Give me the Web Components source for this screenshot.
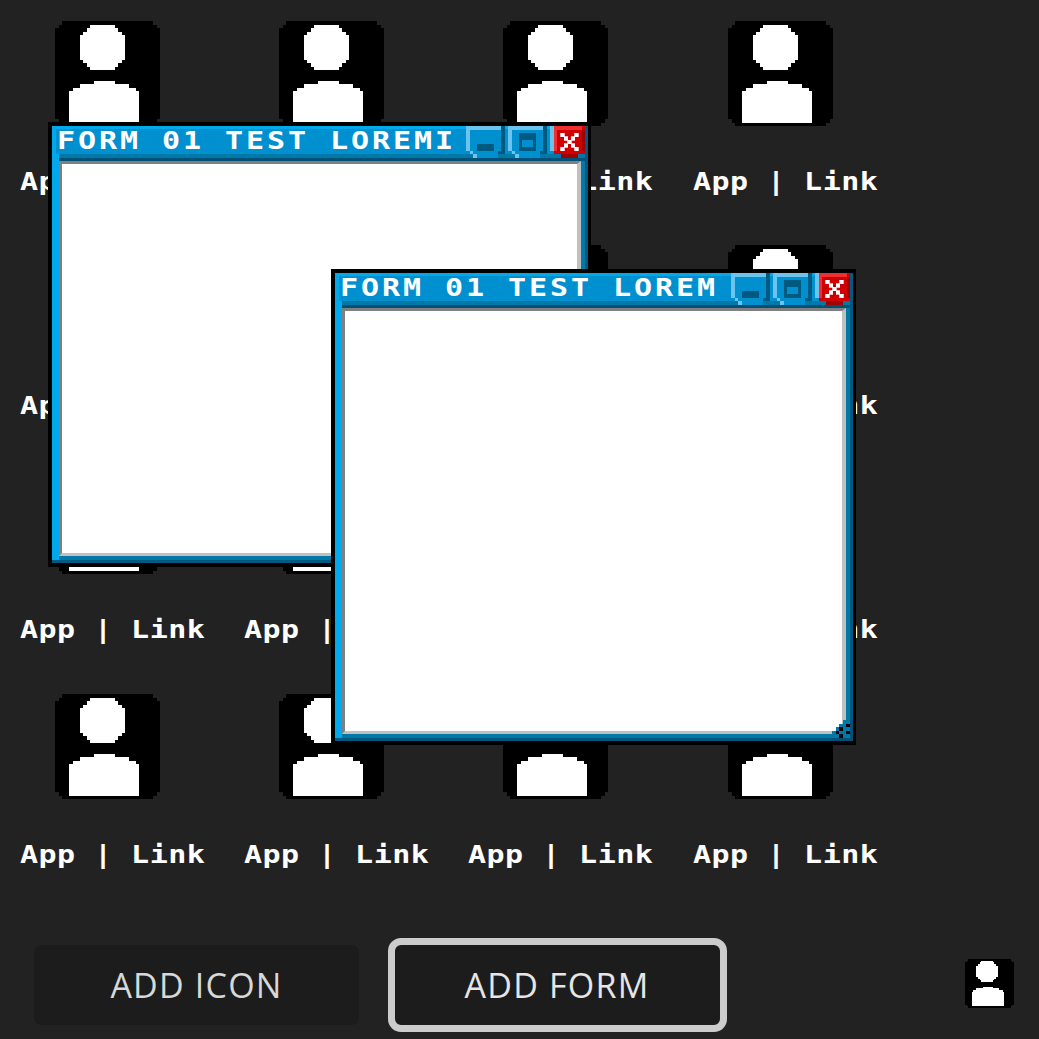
<!DOCTYPE html>
<html>
<head>
<meta charset="utf-8">
<title>Desktop</title>
<style>
  html, body { margin: 0; height: 100%; background: #222; }
</style>
</head>
<body>
<desk-top></desk-top>

<script>
const personSvg = `
  <svg viewBox="0 0 30 30" shape-rendering="crispEdges" width="100%" height="100%">
    <path fill="#000" d="M2 0h26v1h1v1h1v26h-1v1h-1v1H2v-1H1v-1H0V2h1V1h1z"/>
    <path fill="#fff" d="M10 1h7v1h1v1h1v1h1v7h-1v1h-1v1h-1v1h-7v-1H9v-1H8v-1H7V4h1V3h1V2h1z"/>
    <path fill="#fff" d="M11 17h6v1h4v1h2v1h1v9H4v-9h1v-1h2v-1h4z"/>
  </svg>`;

// blocky look for the labels, the text itself stays real text
const pixelFilter = `
  <svg width="0" height="0" style="position:absolute">
    <filter id="px" x="0" y="0" width="100%" height="100%" color-interpolation-filters="sRGB">
      <feFlood x="1" y="1" width="1" height="1" flood-color="#fff"/>
      <feComposite width="3" height="3"/>
      <feTile result="a"/>
      <feComposite in="SourceGraphic" in2="a" operator="in"/>
      <feMorphology operator="dilate" radius="1"/>
      <feComponentTransfer>
        <feFuncA type="linear" slope="4" intercept="-1.2"/>
      </feComponentTransfer>
    </filter>
  </svg>`;

class PersonIcon extends HTMLElement {
  connectedCallback() {
    this.attachShadow({ mode: 'open' }).innerHTML = `
      <style>
        :host { display: block; width: 105px; height: 105px; }
        svg { display: block; }
      </style>
      ${personSvg}`;
  }
}

class PixelText extends HTMLElement {
  connectedCallback() {
    this.attachShadow({ mode: 'open' }).innerHTML = `
      <style>
        :host {
          display: block;
          width: 345px;
          height: var(--line, 24px);
          color: #fff;
          font: bold 20.6px/var(--line, 24px) "DejaVu Sans Mono", monospace;
          letter-spacing: var(--track, 0.3px);
          filter: url(#px);
          transform: scale(1.1667);
          transform-origin: left top;
        }
        span {
          display: inline-block;
          white-space: pre;
          transform: scaleX(1.25);
          transform-origin: left center;
        }
      </style>
      ${pixelFilter}
      <span><slot></slot></span>`;
  }
}

class AppLink extends HTMLElement {
  connectedCallback() {
    this.attachShadow({ mode: 'open' }).innerHTML = `
      <style>
        :host { display: block; height: 224.2px; }
        person-icon { margin-left: 35px; }
        pixel-text { margin-top: 42px; }
      </style>
      <person-icon></person-icon>
      <pixel-text><slot></slot></pixel-text>`;
  }
}

class WinButton extends HTMLElement {
  connectedCallback() {
    const kind = this.getAttribute('kind');
    const light = '#6cc4ec', dark = '#005a80', blue = '#0090d0';
    let art = '';
    if (kind === 'close') {
      art = `
        <svg viewBox="0 0 10 9" width="35" height="31.5" shape-rendering="crispEdges">
          <rect x="0" width="1" height="7" fill="${light}"/>
          <rect x="1" width="9" height="8" fill="#d00000"/>
          <rect x="1" width="8" height="1" fill="#f03030"/>
          <rect x="1" width="1" height="7" fill="#f03030"/>
          <rect x="9" y="1" width="1" height="6" fill="#a00000"/>
          <rect x="3" y="8" width="5" height="1" fill="#a00000"/>
          <path fill="#fff" stroke="#fff" stroke-width=".2" d="M3 2h1v1H3zM7 2h1v1H7zM4 3h1v1H4zM6 3h1v1H6zM5 4h1v1H5zM4 5h1v1H4zM6 5h1v1H6zM3 6h1v1H3zM7 6h1v1H7z"/>
        </svg>`;
    } else {
      const glyph = kind === 'min'
        ? `<rect x="3" y="5" width="5" height="2" fill="${dark}"/>`
        : `<rect x="3" y="2" width="5" height="5" fill="${dark}"/><rect x="4" y="4" width="3" height="2" fill="${blue}"/>`;
      art = `
        <svg viewBox="0 0 11 9" width="38.5" height="31.5" shape-rendering="crispEdges">
          <rect x="1" y="1" width="9" height="6" fill="${blue}"/>
          <rect x="2" y="7" width="7" height="1" fill="${blue}"/>
          <rect x="3" y="8" width="6" height="1" fill="${blue}"/>
          <rect width="10" height="1" fill="${light}"/>
          <rect width="1" height="7" fill="${light}"/>
          <rect x="1" y="7" width="1" height="1" fill="${light}"/>
          <rect x="2" y="8" width="1" height="1" fill="${light}"/>
          <rect x="10" width="1" height="7" fill="${dark}"/>
          <rect x="9" y="7" width="2" height="1" fill="${dark}"/>
          ${glyph}
        </svg>`;
    }
    this.attachShadow({ mode: 'open' }).innerHTML = `
      <style>
        :host { display: block; flex: none; }
        svg { display: block; }
      </style>
      ${art}`;
  }
}

class FormWindow extends HTMLElement {
  connectedCallback() {
    this.attachShadow({ mode: 'open' }).innerHTML = `
      <style>
        :host {
          position: absolute;
          box-sizing: border-box;
          display: flex;
          border: solid #000;
          border-width: 4px 3px 4px 4px;
        }
        .chrome {
          flex: 1;
          min-width: 0;
          display: flex;
          flex-direction: column;
          box-sizing: border-box;
          background: #00a8ec;
          padding: 3px 0 0 4px;
          border-right: 3px solid #005a80;
          border-bottom: 3px solid #005a80;
        }
        .title {
          flex: none;
          height: 25px;
          display: flex;
          justify-content: space-between;
          background: #0090d0;
          position: relative;
          z-index: 1;
        }
        pixel-text {
          flex: none;
          --line: 21.4px;
          --track: 2px;
          margin-left: 1px;
        }
        .buttons {
          flex: none;
          display: flex;
          gap: 3.5px;
          margin-top: -3px;
          height: 31.5px;
        }
        .well {
          flex: 1;
          min-height: 0;
          margin-left: 3px;
          display: flex;
          flex-direction: column;
        }
        .band {
          flex: none;
          height: 3px;
          background: #005078;
          border-top: 4px solid #0078a8;
        }
        .body {
          flex: 1;
          min-height: 0;
          display: flex;
          border-right: 4px solid #0078a8;
          border-bottom: 4px solid #0078a8;
          position: relative;
        }
        .paper {
          flex: 1;
          background: #fff;
          border-top: 3px solid #808080;
          border-left: 3px solid #808080;
          border-right: 4px solid #c0c0c0;
          border-bottom: 3px solid #c0c0c0;
        }
        .grip {
          position: absolute;
          right: -7px;
          bottom: -7px;
          width: 21px;
          height: 21px;
          display: block;
        }
      </style>
      <div class="chrome">
        <div class="title">
          <pixel-text><slot></slot></pixel-text>
          <div class="buttons">
            <win-button kind="min"></win-button>
            <win-button kind="max"></win-button>
            <win-button kind="close"></win-button>
          </div>
        </div>
        <div class="well">
          <div class="band"></div>
          <div class="body">
            <div class="paper"></div>
            <svg class="grip" viewBox="0 0 6 6" shape-rendering="crispEdges">
              <path fill="#0078a8" d="M3 0h3v6H0V3h1V2h1V1h1z"/>
              <path fill="#005078" d="M0 5h6v1H0zM5 0h1v6H5z"/>
              <path fill="#000" d="M4 1h1v1H4zM2 2h1v1H2zM4 3h1v1H4zM1 3h1v1H1zM2 4h1v1H2z"/>
            </svg>
          </div>
        </div>
      </div>`;
  }
}

class PageButton extends HTMLElement {
  connectedCallback() {
    this.attachShadow({ mode: 'open' }).innerHTML = `
      <style>
        :host {
          display: flex;
          flex: none;
          align-items: center;
          justify-content: center;
          width: 325px;
          height: 80px;
          background: #1c1c1c;
          border-radius: 8px;
          color: #d8d8d8;
          font: 500 34px "Open Sans", sans-serif;
          letter-spacing: 1.2px;
        }
        :host([focused]) {
          color: #e6e6e6;
          outline: 7px solid #ccc;
          outline-offset: 0;
          border-radius: 6px;
        }
      </style>
      <slot></slot>`;
  }
}

class DeskTop extends HTMLElement {
  connectedCallback() {
    const links = Array.from({ length: 16 }, () => '<app-link>App | Link</app-link>').join('');
    this.attachShadow({ mode: 'open' }).innerHTML = `
      <style>
        :host {
          display: block;
          position: relative;
          width: 1039px;
          height: 1039px;
          overflow: hidden;
        }
        .grid {
          display: grid;
          grid-template-columns: repeat(4, 224.2px);
          align-content: start;
          box-sizing: border-box;
          padding: 21px 0 0 20px;
          height: 919px;
        }
        .bar {
          display: flex;
          align-items: flex-start;
          padding: 26px 25px 0 34px;
        }
        .bar page-button + page-button { margin-left: 35.5px; }
        .me { width: 49px; height: 49px; margin: 14px 0 0 auto; }
        .win1 { left: 48px; top: 122px; width: 543px; height: 445px; }
        .win2 { left: 331px; top: 269px; width: 525px; height: 476px; }
      </style>
      <div class="grid">${links}</div>
      <div class="bar">
        <page-button>ADD ICON</page-button>
        <page-button focused>ADD FORM</page-button>
        <person-icon class="me"></person-icon>
      </div>
      <form-window class="win1">FORM 01 TEST LOREMI</form-window>
      <form-window class="win2">FORM 01 TEST LOREM</form-window>`;
  }
}

customElements.define('person-icon', PersonIcon);
customElements.define('pixel-text', PixelText);
customElements.define('app-link', AppLink);
customElements.define('win-button', WinButton);
customElements.define('form-window', FormWindow);
customElements.define('page-button', PageButton);
customElements.define('desk-top', DeskTop);
</script>
</body>
</html>
